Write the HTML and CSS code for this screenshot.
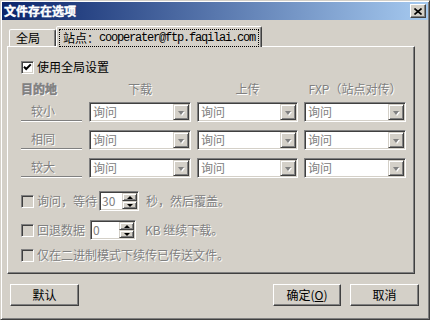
FILE: index.html
```html
<!DOCTYPE html>
<html lang="zh-CN">
<head>
  <meta charset="UTF-8">
  <title>文件存在选项</title>
  <link rel="stylesheet" href="styles.css">
</head>
<body>

  <div class="window">
    <div class="titlebar">
      <span class="title">文件存在选项</span>
      <span class="close">
        <svg width="8" height="7" viewBox="0 0 8 7"><path d="M0.5 0.5 L7.5 6.5 M7.5 0.5 L0.5 6.5" stroke="#000" stroke-width="1.6"/></svg>
      </span>
    </div>

    <div class="content">
      <div class="tabs">
        <div class="tab first">全局</div>
        <div class="tab active"><span class="focus">站点：<span class="mono">cooperater@ftp.faqilai.com</span></span></div>
      </div>

      <div class="panel">
        <div class="row check-row">
          <span class="box on">
            <svg width="9" height="9" viewBox="0 0 9 9"><polyline points="1,3.8 3.2,6 7.8,1.4" fill="none" stroke="#000" stroke-width="2"/></svg>
          </span>
          使用全局设置
        </div>

        <div class="grid">
          <div class="head dest dis">目的地</div>
          <div class="head dis">下载</div>
          <div class="head dis">上传</div>
          <div class="head dis">FXP（站点对传）</div>

          <div class="rlabel dis">较小</div>
          <div class="combo"><span class="val dis">询问</span><span class="drop"></span></div>
          <div class="combo"><span class="val dis">询问</span><span class="drop"></span></div>
          <div class="combo"><span class="val dis">询问</span><span class="drop"></span></div>

          <div class="rlabel dis">相同</div>
          <div class="combo"><span class="val dis">询问</span><span class="drop"></span></div>
          <div class="combo"><span class="val dis">询问</span><span class="drop"></span></div>
          <div class="combo"><span class="val dis">询问</span><span class="drop"></span></div>

          <div class="rlabel dis">较大</div>
          <div class="combo"><span class="val dis">询问</span><span class="drop"></span></div>
          <div class="combo"><span class="val dis">询问</span><span class="drop"></span></div>
          <div class="combo"><span class="val dis">询问</span><span class="drop"></span></div>
        </div>

        <div class="row opt opt1">
          <span class="box"></span>
          <span class="dis">询问，等待</span>
          <span class="spin wait"><span class="val dis">30</span><span class="arrows"><span class="up"></span><span class="down"></span></span></span>
          <span class="dis after">秒，然后覆盖。</span>
        </div>
        <div class="row opt opt2">
          <span class="box"></span>
          <span class="dis">回退数据</span>
          <span class="spin back"><span class="val dis">0</span><span class="arrows"><span class="up"></span><span class="down"></span></span></span>
          <span class="dis after kb">KB 继续下载。</span>
        </div>
        <div class="row opt opt3">
          <span class="box"></span>
          <span class="dis">仅在二进制模式下续传已传送文件。</span>
        </div>
      </div>

      <div class="buttons">
        <button class="btn">默认</button>
        <button class="btn ok">确定(<u>O</u>)</button>
        <button class="btn">取消</button>
      </div>
    </div>
  </div>

</body>
</html>
```

FILE: styles.css
```css
body {
  margin: 0;
  font-family: "Noto Sans CJK SC", "Liberation Sans", sans-serif;
  font-size: 12px;
  line-height: 14px;
  color: #000;
}

.window {
  box-sizing: border-box;
  width: 430px;
  height: 320px;
  padding: 1px;
  background: #d4d0c8;
  border: 1px solid;
  border-color: #d4d0c8 #404040 #404040 #d4d0c8;
  box-shadow: inset 1px 1px #fff, inset -1px -1px #808080;
}

.titlebar {
  height: 18px;
  display: flex;
  align-items: center;
  justify-content: space-between;
  padding-left: 2px;
  background: linear-gradient(to right, #0a246a, #a6caf0);
}

.title {
  color: #fff;
  font-weight: bold;
  -webkit-text-stroke: 0.4px #fff;
}

.close {
  box-sizing: border-box;
  width: 16px;
  height: 14px;
  margin-right: 2px;
  display: flex;
  align-items: center;
  justify-content: center;
  background: #d4d0c8;
  border: 1px solid;
  border-color: #fff #404040 #404040 #fff;
  box-shadow: inset -1px -1px #808080;
}

.content {
  padding: 6px 9px 0 5px;
}

/* tabs */
.tabs {
  height: 20px;
  display: flex;
  align-items: flex-end;
  padding-left: 2px;
}

.tab {
  box-sizing: border-box;
  height: 17px;
  display: flex;
  align-items: center;
  padding: 0 5px;
  background: #d4d0c8;
  border: 1px solid;
  border-bottom: none;
  border-color: #fff #404040 transparent #fff;
  box-shadow: inset -1px 0 #808080;
  border-radius: 2px 2px 0 0;
}

.tab.first {
  width: 47px;
  padding-left: 6px;
}

.tab.active {
  width: 206px;
  height: 21px;
  margin-bottom: -1px;
  padding: 1px 2px 0 2px;
  position: relative;
  z-index: 1;
}

.focus {
  box-sizing: border-box;
  flex: 1;
  height: 18px;
  display: flex;
  align-items: center;
  padding-left: 3px;
  border: 1px dotted #000;
}

.mono {
  font-family: "Liberation Mono", monospace;
  letter-spacing: -1.2px;
}

.panel {
  box-sizing: border-box;
  width: 408px;
  height: 228px;
  padding: 13px 0 0 13px;
  border: 1px solid;
  border-color: #fff #404040 #404040 #fff;
  box-shadow: inset -1px -1px #808080;
}

.dis {
  color: #808080;
  text-shadow: 1px 1px 0 #fff;
}

.row {
  display: flex;
  align-items: center;
}

.check-row {
  height: 14px;
}

.box {
  box-sizing: border-box;
  width: 13px;
  height: 13px;
  margin-right: 3px;
  display: flex;
  align-items: center;
  justify-content: center;
  border: 1px solid;
  border-color: #808080 #fff #fff #808080;
  box-shadow: inset 1px 1px #404040, inset -1px -1px #d4d0c8;
  background: #d4d0c8;
  flex: none;
}

.box.on {
  background: #fff;
}

/* destination grid */
.grid {
  display: grid;
  grid-template-columns: 62px 102px 101px 102px;
  grid-template-rows: 11px 20px 20px 20px;
  column-gap: 6px;
  row-gap: 8px;
  margin-top: 9px;
}

.head {
  line-height: 12px;
  text-align: center;
  white-space: nowrap;
}

.head.dest {
  text-align: left;
  font-weight: bold;
  -webkit-text-stroke: 0.5px #808080;
}

.rlabel {
  box-sizing: border-box;
  height: 19px;
  padding-left: 10px;
  display: flex;
  align-items: center;
  border-bottom: 1px solid #808080;
  box-shadow: 0 1px #fff;
  width: 61px;
}

.combo {
  box-sizing: border-box;
  display: flex;
  align-items: center;
  padding: 1px;
  background: #fff;
  border: 1px solid;
  border-color: #808080 #fff #fff #808080;
  box-shadow: inset 1px 1px #404040, inset -1px -1px #d4d0c8;
}

.combo .val {
  flex: 1;
  padding-left: 2px;
}

.drop {
  box-sizing: border-box;
  width: 16px;
  height: 16px;
  background: #d4d0c8;
  border: 1px solid;
  border-color: #d4d0c8 #404040 #404040 #d4d0c8;
  box-shadow: inset 1px 1px #fff, inset -1px -1px #808080;
  position: relative;
}

.drop::after {
  content: "";
  position: absolute;
  left: 4px;
  top: 6px;
  border-left: 3.5px solid transparent;
  border-right: 3.5px solid transparent;
  border-top: 4px solid #808080;
  filter: drop-shadow(1px 1px 0 #fff);
}

/* options */
.opt {
  height: 20px;
}

.opt1 {
  margin-top: 13px;
}

.opt2 {
  margin-top: 9px;
}

.opt3 {
  margin-top: 5px;
}

.spin {
  box-sizing: border-box;
  height: 20px;
  display: flex;
  padding: 1px;
  background: #fff;
  border: 1px solid;
  border-color: #808080 #fff #fff #808080;
  box-shadow: inset 1px 1px #404040, inset -1px -1px #d4d0c8;
}

.spin .val {
  flex: 1;
  padding-left: 1px;
  line-height: 16px;
}

.spin.wait {
  width: 40px;
  margin-left: 2px;
}

.spin.back {
  width: 46px;
  margin-left: 5px;
}

.arrows {
  width: 15px;
  display: flex;
  flex-direction: column;
}

.up,
.down {
  flex: 1;
  box-sizing: border-box;
  background: #d4d0c8;
  border: 1px solid;
  border-color: #d4d0c8 #404040 #404040 #d4d0c8;
  box-shadow: inset 1px 1px #fff, inset -1px -1px #808080;
  display: flex;
  align-items: center;
  justify-content: center;
}

.up::after {
  content: "";
  border-left: 3px solid transparent;
  border-right: 3px solid transparent;
  border-bottom: 3px solid #000;
}

.down::after {
  content: "";
  border-left: 3px solid transparent;
  border-right: 3px solid transparent;
  border-top: 3px solid #000;
}

.after {
  margin-left: 7px;
}

.after.kb {
  margin-left: 9px;
}

/* bottom buttons */
.buttons {
  display: flex;
  gap: 9px;
  margin-top: 10px;
  padding-left: 3px;
}

.btn {
  box-sizing: border-box;
  width: 69px;
  height: 22px;
  padding: 0;
  font: inherit;
  color: #000;
  background: #d4d0c8;
  border: 1px solid;
  border-color: #fff #404040 #404040 #fff;
  box-shadow: inset -1px -1px #808080;
}

.btn.ok {
  width: 68px;
  margin-left: auto;
}
```
